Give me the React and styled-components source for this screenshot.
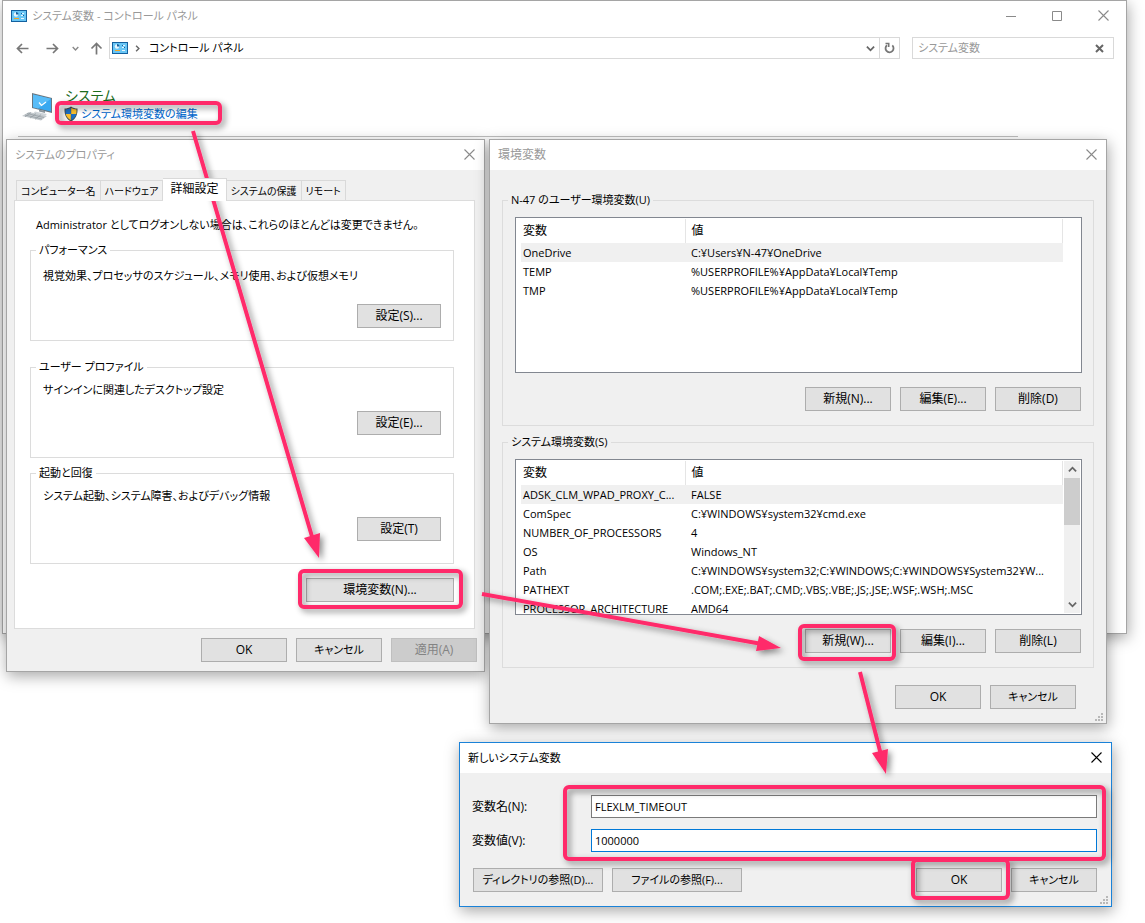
import React from "react";
import styled, { createGlobalStyle, css } from "styled-components";

const PINK = "#ff2b6a";

const GlobalStyle = createGlobalStyle`
  * {
    box-sizing: border-box;
  }
  body {
    margin: 0;
    background: #fff;
    color: #000;
    font-family: "Open Sans", "Noto Sans CJK JP", sans-serif;
    font-size: 11px;
    line-height: 16px;
    font-feature-settings: "palt";
  }
  button, input {
    font: inherit;
    font-feature-settings: inherit;
    color: inherit;
  }
`;

const Desktop = styled.main`
  position: relative;
  min-height: 923px;
  overflow: hidden;
`;

// Windows float freely on the desktop
const Frame = styled.section`
  position: absolute;
  display: flex;
  flex-direction: column;
  border: 1px solid ${(p) => (p.$active ? "#1a82d8" : "#a5a5a5")};
  background: ${(p) => p.$bg || "#f0f0f0"};
  box-shadow: 1px 4px 14px rgba(0, 0, 0, 0.35);
`;

const PanelWindow = styled(Frame)`
  left: 2px;
  right: 18px;
  top: 0;
  height: 634px;
`;

const PropsWindow = styled(Frame)`
  left: 6px;
  top: 139px;
  width: 479px;
`;

const EnvWindow = styled(Frame)`
  left: 489px;
  top: 139px;
  width: 618px;
`;

const NewWindow = styled(Frame)`
  left: 459px;
  top: 742px;
  width: 653px;
`;

const TitleBar = styled.header`
  display: flex;
  align-items: center;
  gap: 5px;
  height: 30px;
  padding-left: 8px;
  background: #fff;
  color: ${(p) => (p.$active ? "#000" : "#999")};
`;

const Title = styled.h1`
  flex: 1;
  margin: 0;
  font-size: ${(p) => (p.$large ? 12 : 11)}px;
  font-weight: 400;
`;

const CaptionButtons = styled.div`
  display: flex;
  align-self: flex-start;
`;

const CaptionButton = styled.button`
  display: flex;
  align-items: center;
  align-self: flex-start;
  justify-content: center;
  width: ${(p) => (p.$wide ? 46 : 30)}px;
  height: 29px;
  padding: 0;
  border: 0;
  background: none;
`;

const NavRow = styled.nav`
  display: flex;
  align-items: center;
  padding: 6px 12px 0 13px;
`;

const NavButton = styled.button`
  display: flex;
  justify-content: center;
  width: ${(p) => p.$w}px;
  margin: 0 0 0 ${(p) => p.$gap || 0}px;
  padding: 0;
  border: 0;
  background: none;
`;

const Box = styled.div`
  display: flex;
  align-items: center;
  height: 22px;
  border: 1px solid #d9d9d9;
  background: #fff;
`;

const Address = styled(Box)`
  flex: 1;
  margin-left: 6px;
  padding-left: 2px;
`;

const Crumb = styled.span`
  flex: 1;
  padding-left: 3px;
`;

const Refresh = styled(NavButton)`
  align-items: center;
  height: 20px;
  border-left: 1px solid #d9d9d9;
`;

const Search = styled(Box)`
  width: 202px;
  margin-left: 12px;
  padding-left: 5px;
`;

const SearchInput = styled.input`
  flex: 1;
  min-width: 0;
  padding: 0;
  border: 0;
  outline: 0;
  background: none;
  color: #999;
`;

const Category = styled.div`
  display: flex;
  align-items: flex-end;
  gap: 9px;
  padding: 26px 0 0 19px;
`;

const CategoryTitle = styled.h2`
  margin: 0 0 0 2px;
  color: #1c6b1c;
  font-size: 14px;
  font-weight: 400;
  line-height: 21px;
`;

const TaskLink = styled.a`
  display: flex;
  align-items: center;
  gap: 2px;
  color: #0066cc;
  text-decoration: none;
`;

const Rule = styled.hr`
  width: 1000px;
  max-width: 90%;
  margin: 14px 0 0 15px;
  border: 0;
  border-top: 1px solid #bfbfbf;
`;

const Button = styled.button`
  width: ${(p) => p.$w || 86}px;
  height: 24px;
  padding: 0;
  border: 1px solid #adadad;
  background: #e1e1e1;
  font-size: ${(p) => (p.$small ? 11 : 12)}px;
  white-space: nowrap;
  &:disabled {
    border-color: #bfbfbf;
    background: #ccc;
    color: #838383;
  }
`;

const ButtonRow = styled.div`
  display: flex;
  justify-content: flex-end;
  gap: 9px;
  padding: ${(p) => p.$pad || "0"};
`;

const Tabs = styled.div`
  display: flex;
  align-items: flex-end;
  padding: 8px 9px 0;
`;

const Tab = styled.button`
  height: 20px;
  padding: 0 4px;
  border: 1px solid #d9d9d9;
  border-bottom: 0;
  background: #f0f0f0;
  font-size: 10px;
  white-space: nowrap;
  & + & {
    border-left: 0;
  }
  ${(p) =>
    p.$selected &&
    css`
      z-index: 1;
      height: 23px;
      margin-bottom: -1px;
      padding: 0 7px 3px;
      background: #fff;
      font-size: 12px;
    `}
`;

const TabPanel = styled.div`
  margin: 0 9px 0 7px;
  padding: 16px 20px 26px 15px;
  border: 1px solid #dcdcdc;
  background: #fff;
`;

const Note = styled.p`
  margin: 0 0 9px 6px;
`;

const Group = styled.fieldset`
  min-width: 0;
  margin: 0 0 ${(p) => p.$after || 0}px;
  padding: 0 11px 12px 12px;
  border: 1px solid #dcdcdc;
`;

const Legend = styled.legend`
  margin-left: -7px;
  padding: 0 3px;
`;

const GroupText = styled.p`
  margin: ${(p) => (p.$roomy ? 10 : 7)}px 0 ${(p) => (p.$roomy ? 20 : 13)}px;
`;

const GroupFooter = styled.div`
  display: flex;
  justify-content: flex-end;
  padding: 0 1px ${(p) => (p.$roomy ? 0 : 10)}px 0;
`;

const EnvBody = styled.div`
  padding: 22px 12px 14px;
`;

const ListBox = styled.div`
  display: flex;
  height: 156px;
  margin-top: 9px;
  padding: 1px 1px 1px 5px;
  border: 1px solid #828790;
  background: #fff;
  overflow: hidden;
`;

const ListView = styled.div`
  flex: 1;
  min-width: 0;
  overflow: hidden;
`;

const Table = styled.table`
  width: 100%;
  table-layout: fixed;
  border-collapse: collapse;
  text-align: left;
  th {
    height: 24px;
    padding: 0 2px;
    border-right: 1px solid #e5e5e5;
    font-size: 12px;
    font-weight: 400;
  }
  th:first-child {
    width: 164px;
  }
  th + th {
    padding-left: 6px;
  }
  td {
    height: 19px;
    padding: 0 0 0 2px;
    overflow: hidden;
    white-space: nowrap;
  }
  td + td {
    padding-left: 6px;
  }
  tbody tr:first-child {
    background: #f0f0f0;
  }
`;

const ScrollBar = styled.div`
  display: flex;
  flex-direction: column;
  width: 17px;
  border-left: 1px solid #fff;
  background: #f0f0f0;
`;

const ScrollArrow = styled.button`
  display: flex;
  align-items: center;
  justify-content: center;
  height: 17px;
  padding: 0;
  border: 0;
  background: none;
`;

const ScrollThumb = styled.div`
  height: 47px;
  margin-bottom: auto;
  background: #cdcdcd;
`;

const Gutter = styled.div`
  width: 17px;
`;

const GripCorner = styled.svg`
  position: absolute;
  right: 2px;
  bottom: 1px;
`;

const Form = styled.form`
  display: flex;
  flex-direction: column;
  gap: 11px;
  padding: 22px 14px 14px 12px;
`;

const Field = styled.div`
  display: grid;
  grid-template-columns: 119px 1fr;
  align-items: center;
  label {
    font-size: 12px;
  }
`;

const TextInput = styled.input`
  min-width: 0;
  height: 23px;
  padding: 0 3px;
  border: 1px solid ${(p) => (p.$focused ? "#0078d7" : "#7a7a7a")};
  outline: 0;
  background: #fff;
`;

const FormButtons = styled.div`
  display: flex;
  gap: 9px;
  padding: 5px 0 0 1px;
`;

const Spacer = styled.span`
  flex: 1;
`;

const Overlay = styled.svg`
  position: absolute;
  left: 0;
  top: 0;
  pointer-events: none;
`;

const CloseIcon = ({ color = "#8a8a8a" }) => (
  <svg width="11" height="11" viewBox="0 0 11 11" stroke={color} strokeWidth="1.1">
    <path d="M.5.5l10 10M10.5.5l-10 10" />
  </svg>
);

const Chevron = ({ d, size = 9, width = 2, color = "#666" }) => (
  <svg width={size} height={size} viewBox="0 0 10 10" fill="none" stroke={color} strokeWidth={width}>
    <path d={d} />
  </svg>
);

const Arrow = ({ d }) => (
  <svg width="13" height="13" viewBox="0 0 13 13" fill="none" stroke="#777" strokeWidth="1.7">
    <path d={d} />
  </svg>
);

const PanelIcon = () => (
  <svg width="16" height="12" viewBox="0 0 16 12">
    <rect width="16" height="12" fill="#13609f" />
    <rect x="1" y="1" width="14" height="10" fill="#69c6f5" />
    <circle cx="5" cy="4.5" r="2.2" fill="#e6f5fd" />
    <path d="M5 4.5V2a2.5 2.5 0 0 1 2.5 2.5z" fill="#13609f" />
    <path d="M10 3.5h3M10 5.5h3" stroke="#e6f5fd" />
    <path d="M10 3.5h1M12 5.5h1" stroke="#13609f" />
    <path d="M3 8.500h5" stroke="#f5a623" strokeWidth="1" />
    <path d="M10 8.500h3" stroke="#e6f5fd" strokeWidth="1" />
  </svg>
);

const ComputerIcon = () => (
  <svg width="32" height="30" viewBox="0 0 32 30">
    <path d="M10 1l20 5v15l-20-5z" fill="#6a7780" />
    <path d="M11 2.5l18 4.3v12.8l-18-4.3z" fill="#38a8f0" />
    <path d="M11 2.5l18 4.3-13 9.7-5-1.2z" fill="#59bdf8" />
    <path d="M17 10.5l2.5 3 4.5-3.5" fill="none" stroke="#fff" strokeWidth="1.2" />
    <path d="M17 17.5l6 1.5v2l-6-1.5z" fill="#8b969d" />
    <path d="M13 19.5l12 2.5-2 1.8-12-2.4z" fill="#cfd5d9" />
    <path d="M7 20l18 4-6 4.5L0 24z" fill="#c3c9cd" />
    <path d="M5 21.5l17 4M3 23l17 4M9 20.5l-6 4.3M14 21.6l-6 4.5M19 22.7l-6 4.6" stroke="#8f989e" strokeWidth=".7" />
  </svg>
);

const ShieldIcon = () => (
  <svg width="16" height="16" viewBox="0 0 16 16">
    <path d="M8 .5c2 1.4 4.3 2 6.5 2C14.8 8.5 13 13 8 15.5 3 13 1.2 8.5 1.5 2.5c2.2 0 4.5-.6 6.5-2z" fill="#44504f" />
    <path d="M7.8 2v6H2.7c-.2-1.4-.3-2.9-.2-4.4C4.5 3.4 6.3 2.9 7.8 2z" fill="#1b6fc4" />
    <path d="M8.2 2v6h5.1c.2-1.4.3-2.9.2-4.4-2-.2-3.8-.7-5.3-1.6z" fill="#fbc02d" />
    <path d="M7.8 8v6.2C5.1 12.8 3.4 10.7 2.7 8z" fill="#fbc02d" />
    <path d="M8.2 8v6.2c2.7-1.4 4.4-3.5 5.1-6.2z" fill="#1b6fc4" />
  </svg>
);

const Grip = () => (
  <GripCorner width="9" height="9" viewBox="0 0 9 9" fill="#b8b8b8">
    <path d="M6 0h2v2H6zM6 3h2v2H6zM6 6h2v2H6zM3 3h2v2H3zM3 6h2v2H3zM0 6h2v2H0z" />
  </GripCorner>
);

const userVars = [
  ["OneDrive", "C:¥Users¥N-47¥OneDrive"],
  ["TEMP", "%USERPROFILE%¥AppData¥Local¥Temp"],
  ["TMP", "%USERPROFILE%¥AppData¥Local¥Temp"],
];

const systemVars = [
  ["ADSK_CLM_WPAD_PROXY_C...", "FALSE"],
  ["ComSpec", "C:¥WINDOWS¥system32¥cmd.exe"],
  ["NUMBER_OF_PROCESSORS", "4"],
  ["OS", "Windows_NT"],
  ["Path", "C:¥WINDOWS¥system32;C:¥WINDOWS;C:¥WINDOWS¥System32¥W..."],
  ["PATHEXT", ".COM;.EXE;.BAT;.CMD;.VBS;.VBE;.JS;.JSE;.WSF;.WSH;.MSC"],
  ["PROCESSOR_ARCHITECTURE", "AMD64"],
];

const tabs = ["コンピューター名", "ハードウェア", "詳細設定", "システムの保護", "リモート"];

const VarList = ({ rows, scroll }) => (
  <ListBox>
    <ListView>
      <Table>
        <thead>
          <tr>
            <th scope="col">変数</th>
            <th scope="col">値</th>
          </tr>
        </thead>
        <tbody>
          {rows.map(([name, value]) => (
            <tr key={name}>
              <td>{name}</td>
              <td>{value}</td>
            </tr>
          ))}
        </tbody>
      </Table>
    </ListView>
    {scroll ? (
      <ScrollBar>
        <ScrollArrow aria-label="上へ">
          <Chevron d="M1 7l4-4 4 4" />
        </ScrollArrow>
        <ScrollThumb />
        <ScrollArrow aria-label="下へ">
          <Chevron d="M1 3l4 4 4-4" />
        </ScrollArrow>
      </ScrollBar>
    ) : (
      <Gutter />
    )}
  </ListBox>
);

const SettingGroup = ({ title, text, button, roomy, after }) => (
  <Group $after={after}>
    <Legend>{title}</Legend>
    <GroupText $roomy={roomy}>{text}</GroupText>
    <GroupFooter $roomy={roomy}>
      <Button $w={84}>{button}</Button>
    </GroupFooter>
  </Group>
);

const ControlPanel = () => (
  <PanelWindow $bg="#fff">
    <TitleBar>
      <PanelIcon />
      <Title>システム変数 - コントロール パネル</Title>
      <CaptionButtons>
        <CaptionButton $wide aria-label="最小化">
          <svg width="10" height="10" stroke="#8a8a8a"><path d="M0 5.5h10" /></svg>
        </CaptionButton>
        <CaptionButton $wide aria-label="最大化">
          <svg width="10" height="10" fill="none" stroke="#8a8a8a"><path d="M.5.5h9v9h-9z" /></svg>
        </CaptionButton>
        <CaptionButton $wide aria-label="閉じる">
          <CloseIcon />
        </CaptionButton>
      </CaptionButtons>
    </TitleBar>
    <NavRow>
      <NavButton $w={13} aria-label="戻る"><Arrow d="M12.5 6.5H1.5M6 2L1.5 6.5 6 11" /></NavButton>
      <NavButton $w={13} $gap={17} aria-label="進む"><Arrow d="M.5 6.5h11M7 2l4.5 4.5L7 11" /></NavButton>
      <NavButton $w={7} $gap={13} aria-label="履歴"><Chevron d="M1 3l4 4 4-4" size={7} color="#888" /></NavButton>
      <NavButton $w={13} $gap={11} aria-label="上へ"><Arrow d="M6.5 12.5V1.5M1.5 6.5l5-5 5 5" /></NavButton>
      <Address>
        <PanelIcon />
        <NavButton $w={18} aria-label="展開"><Chevron d="M3 1l4 4-4 4" size={7} /></NavButton>
        <Crumb>コントロール パネル</Crumb>
        <NavButton $w={18} aria-label="場所"><Chevron d="M1 3l4 4 4-4" /></NavButton>
        <Refresh $w={20} aria-label="更新">
          <svg width="11" height="12" viewBox="0 0 11 12" fill="none" stroke="#777" strokeWidth="1.8">
            <path d="M8.3 3.4A4 4 0 1 1 3 3.2" />
            <path d="M1.5 1.5h3.2v3.6" strokeWidth="1.6" />
          </svg>
        </Refresh>
      </Address>
      <Search>
        <SearchInput aria-label="検索" defaultValue="システム変数" />
        <NavButton $w={28} aria-label="検索をクリア">
          <svg width="9" height="9" stroke="#666" strokeWidth="2"><path d="M1 1l7 7M8 1L1 8" /></svg>
        </NavButton>
      </Search>
    </NavRow>
    <Category>
      <ComputerIcon />
      <div>
        <CategoryTitle>システム</CategoryTitle>
        <TaskLink href="#env"><ShieldIcon />システム環境変数の編集</TaskLink>
      </div>
    </Category>
    <Rule />
  </PanelWindow>
);

const SystemProperties = () => (
  <PropsWindow>
    <TitleBar>
      <Title>システムのプロパティ</Title>
      <CaptionButton aria-label="閉じる"><CloseIcon /></CaptionButton>
    </TitleBar>
    <Tabs role="tablist">
      {tabs.map((t, i) => (
        <Tab key={t} role="tab" aria-selected={i === 2} $selected={i === 2}>{t}</Tab>
      ))}
    </Tabs>
    <TabPanel role="tabpanel">
      <Note>Administrator としてログオンしない場合は、これらのほとんどは変更できません。</Note>
      <SettingGroup
        roomy
        after={18}
        title="パフォーマンス"
        text="視覚効果、プロセッサのスケジュール、メモリ使用、および仮想メモリ"
        button="設定(S)..."
      />
      <SettingGroup after={7} title="ユーザー プロファイル" text="サインインに関連したデスクトップ設定" button="設定(E)..." />
      <SettingGroup after={14} title="起動と回復" text="システム起動、システム障害、およびデバッグ情報" button="設定(T)" />
      <ButtonRow>
        <Button $w={148}>環境変数(N)...</Button>
      </ButtonRow>
    </TabPanel>
    <ButtonRow $pad="9px 7px 9px">
      <Button>OK</Button>
      <Button $small>キャンセル</Button>
      <Button disabled>適用(A)</Button>
    </ButtonRow>
  </PropsWindow>
);

const EnvironmentVariables = () => (
  <EnvWindow>
    <TitleBar>
      <Title $large>環境変数</Title>
      <CaptionButton aria-label="閉じる"><CloseIcon /></CaptionButton>
    </TitleBar>
    <EnvBody>
      <Group $after={8}>
        <Legend>N-47 のユーザー環境変数(U)</Legend>
        <VarList rows={userVars} />
        <ButtonRow $pad="14px 1px 2px">
          <Button>新規(N)...</Button>
          <Button>編集(E)...</Button>
          <Button>削除(D)</Button>
        </ButtonRow>
      </Group>
      <Group $after={17}>
        <Legend>システム環境変数(S)</Legend>
        <VarList rows={systemVars} scroll />
        <ButtonRow $pad="14px 1px 2px">
          <Button>新規(W)...</Button>
          <Button>編集(I)...</Button>
          <Button>削除(L)</Button>
        </ButtonRow>
      </Group>
      <ButtonRow $pad="0 18px 0 0">
        <Button>OK</Button>
        <Button $small>キャンセル</Button>
      </ButtonRow>
    </EnvBody>
    <Grip />
  </EnvWindow>
);

const NewVariable = () => (
  <NewWindow $active>
    <TitleBar $active>
      <Title>新しいシステム変数</Title>
      <CaptionButton aria-label="閉じる"><CloseIcon color="#000" /></CaptionButton>
    </TitleBar>
    <Form onSubmit={(e) => e.preventDefault()}>
      <Field>
        <label htmlFor="var-name">変数名(N):</label>
        <TextInput id="var-name" defaultValue="FLEXLM_TIMEOUT" />
      </Field>
      <Field>
        <label htmlFor="var-value">変数値(V):</label>
        <TextInput id="var-value" $focused defaultValue="1000000" />
      </Field>
      <FormButtons>
        <Button type="button" $w={130} $small>ディレクトリの参照(D)...</Button>
        <Button type="button" $w={130} $small>ファイルの参照(F)...</Button>
        <Spacer />
        <Button>OK</Button>
        <Button type="button" $small>キャンセル</Button>
      </FormButtons>
    </Form>
    <Grip />
  </NewWindow>
);

// Step markers: a frame round each control and the arrows between them
const Steps = () => (
  <Overlay width="1145" height="923" viewBox="0 0 1145 923" aria-hidden="true">
    <defs>
      <filter id="drop" x="0" y="0" width="1145" height="923" filterUnits="userSpaceOnUse">
        <feDropShadow dx="3" dy="3" stdDeviation="3" floodColor="#000" floodOpacity="0.45" />
      </filter>
    </defs>
    <g fill="none" stroke={PINK} strokeWidth="4" filter="url(#drop)">
      <rect x="57" y="103" width="163" height="20" rx="4" />
      <rect x="300" y="571" width="161" height="36" rx="4" />
      <rect x="800" y="626" width="94" height="33" rx="4" />
      <rect x="565" y="787" width="539" height="72" rx="4" />
      <rect x="913" y="860" width="95" height="38" rx="4" />
      <path d="M193 131L313 540M482 594L762 644M860 672L881 755" />
      <g fill={PINK} stroke="none">
        <path d="M304 538l16-5-1 25z" />
        <path d="M759 636l22 12-25 3z" />
        <path d="M872 753l16-4-2 25z" />
      </g>
    </g>
  </Overlay>
);

const App = () => (
  <>
    <GlobalStyle />
    <Desktop>
      <ControlPanel />
      <SystemProperties />
      <EnvironmentVariables />
      <NewVariable />
      <Steps />
    </Desktop>
  </>
);

export default App;
